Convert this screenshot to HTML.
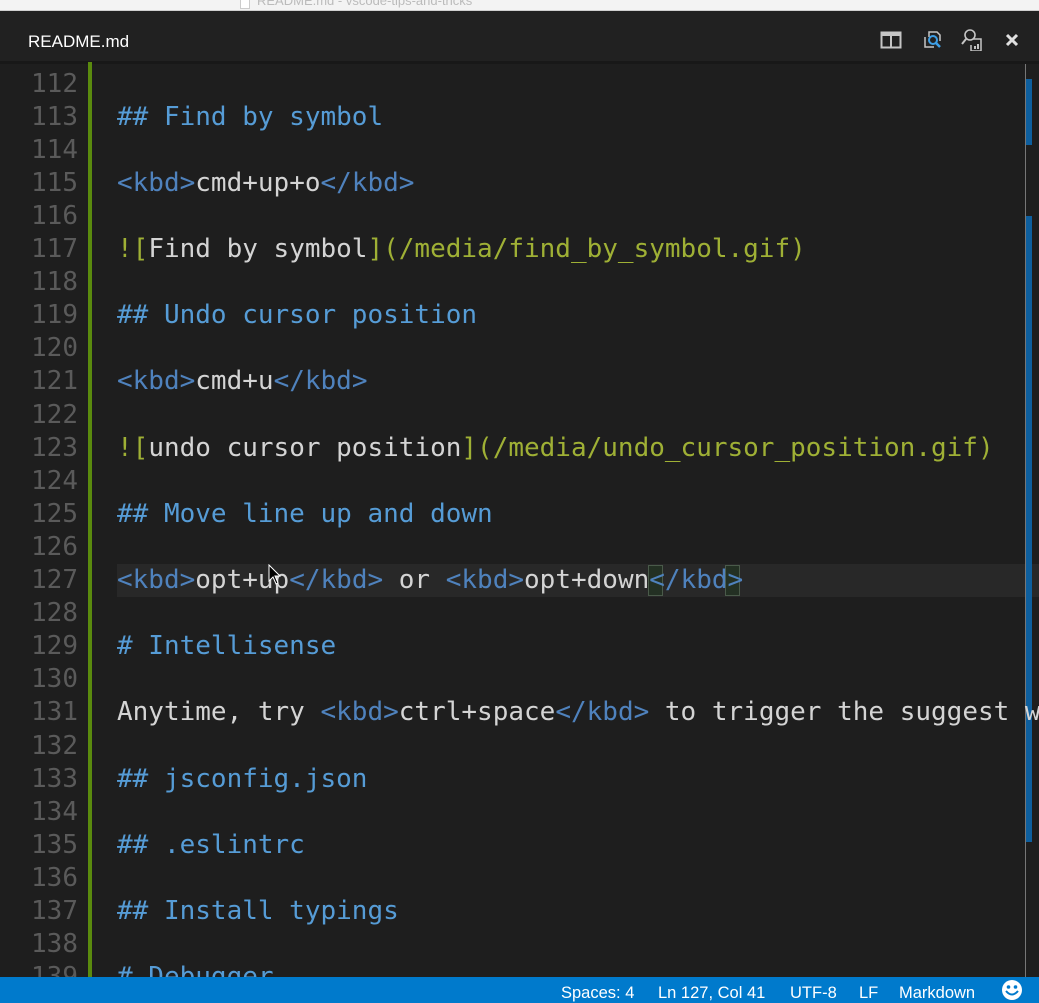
<!DOCTYPE html>
<html><head><meta charset="utf-8"><style>
*{margin:0;padding:0;box-sizing:border-box}
body{width:1039px;height:1003px;background:#1e1e1e;overflow:hidden;position:relative;font-family:"DejaVu Sans Mono","Liberation Mono",monospace}
#title{position:absolute;left:0;top:0;width:1039px;height:11px;background:#f3f3f3;border-bottom:1px solid #cfcfcf;overflow:hidden}
#title span{position:absolute;left:257px;top:-7px;font:13px "Liberation Sans",sans-serif;color:#bbb}
#title i{position:absolute;left:240px;top:-3px;width:10px;height:12px;border:1px solid #ccc;background:#fff}
#tabs{position:absolute;left:0;top:11px;width:1039px;height:51px;background:#212121}
#tabs .name{position:absolute;left:28px;top:21px;font:17px "Liberation Sans",sans-serif;color:#fff}
#sep{position:absolute;left:0;top:61px;width:1039px;height:3px;background:#181818}
#code{position:absolute;left:0;top:2px;width:1039px;height:975px;overflow:hidden}
.gut{position:absolute;left:0;width:78px;text-align:right;color:#5a5a5a;font-size:26px;line-height:33.1px;height:33.1px}
.ln{position:absolute;left:117px;width:922px;overflow:hidden;white-space:pre;font-size:26px;line-height:33.1px;height:33.1px;color:#d4d4d4}
.h{color:#569cd6}.t{color:#4f82bd}.l{color:#9fb035}
#bar{position:absolute;left:88px;top:62px;width:4px;height:915px;background:#5a8a0e}
#hl{position:absolute;left:117px;top:564px;width:922px;height:33px;background:#282828}
#status{position:absolute;left:0;top:977px;width:1039px;height:26px;background:#007acc;color:#fff;font:16.5px "Liberation Sans",sans-serif}
#status span{position:absolute;top:7px;white-space:nowrap}
</style></head><body>
<div id="title"><i></i><span>README.md - vscode-tips-and-tricks</span></div>
<div id="tabs"><div class="name">README.md</div>
<svg style="position:absolute;left:880px;top:20px" width="22" height="18"><rect x="1.5" y="1.5" width="19" height="15" fill="none" stroke="#c5c5c5" stroke-width="2"/><rect x="1" y="1" width="20" height="4" fill="#c5c5c5"/><line x1="11" y1="2" x2="11" y2="17" stroke="#c5c5c5" stroke-width="2"/></svg>
<svg style="position:absolute;left:921px;top:17px" width="24" height="24"><path d="M4 9v10h9M8 9V4h8l3 3v6" fill="none" stroke="#c5c5c5" stroke-width="1.5"/><circle cx="12" cy="12" r="4" fill="none" stroke="#3e9fe6" stroke-width="2"/><line x1="15" y1="15" x2="19" y2="19" stroke="#3e9fe6" stroke-width="2.5"/></svg>
<svg style="position:absolute;left:961px;top:16px" width="24" height="24"><circle cx="9" cy="8" r="5" fill="none" stroke="#c5c5c5" stroke-width="1.6"/><line x1="5" y1="12" x2="1" y2="17" stroke="#c5c5c5" stroke-width="2"/><path d="M12 12h8v12h-10v-6" fill="none" stroke="#c5c5c5" stroke-width="1.5"/><rect x="13" y="19" width="2" height="3" fill="#c5c5c5"/><rect x="16" y="17" width="2" height="5" fill="#c5c5c5"/></svg>
<svg style="position:absolute;left:1005px;top:22px" width="14" height="14"><path d="M2 2L12 12M12 2L2 12" stroke="#e0e0e0" stroke-width="3"/></svg>
</div>
<div id="sep"></div>
<div id="hl"></div>
<div id="bar"></div>
<div style="position:absolute;left:1025px;top:64px;width:1px;height:913px;background:#777"></div>
<div style="position:absolute;left:1026px;top:79px;width:6px;height:66px;background:#0e5f9e"></div>
<div style="position:absolute;left:1026px;top:216px;width:6px;height:626px;background:#0e5f9e"></div>
<div style="position:absolute;left:648px;top:565px;width:15px;height:31px;border:1px solid #4a5a4a;background:#233023"></div>
<div style="position:absolute;left:725px;top:565px;width:15px;height:31px;border:1px solid #4a5a4a;background:#233023"></div>
<div id="code">
<div class="gut" style="top:65.5px">112</div>
<div class="gut" style="top:98.6px">113</div><div class="ln h" style="top:98.6px">## Find by symbol</div>
<div class="gut" style="top:131.7px">114</div>
<div class="gut" style="top:164.8px">115</div><div class="ln" style="top:164.8px"><span class="t">&lt;kbd&gt;</span>cmd+up+o<span class="t">&lt;/kbd&gt;</span></div>
<div class="gut" style="top:197.9px">116</div>
<div class="gut" style="top:231px">117</div><div class="ln" style="top:231px"><span class="l">![</span>Find by symbol<span class="l">](/media/find_by_symbol.gif)</span></div>
<div class="gut" style="top:264.1px">118</div>
<div class="gut" style="top:297.2px">119</div><div class="ln h" style="top:297.2px">## Undo cursor position</div>
<div class="gut" style="top:330.3px">120</div>
<div class="gut" style="top:363.4px">121</div><div class="ln" style="top:363.4px"><span class="t">&lt;kbd&gt;</span>cmd+u<span class="t">&lt;/kbd&gt;</span></div>
<div class="gut" style="top:396.5px">122</div>
<div class="gut" style="top:429.6px">123</div><div class="ln" style="top:429.6px"><span class="l">![</span>undo cursor position<span class="l">](/media/undo_cursor_position.gif)</span></div>
<div class="gut" style="top:462.7px">124</div>
<div class="gut" style="top:495.8px">125</div><div class="ln h" style="top:495.8px">## Move line up and down</div>
<div class="gut" style="top:528.9px">126</div>
<div class="gut" style="top:562px">127</div><div class="ln" style="top:562px"><span class="t">&lt;kbd&gt;</span>opt+up<span class="t">&lt;/kbd&gt;</span> or <span class="t">&lt;kbd&gt;</span>opt+down<span class="t">&lt;/kbd&gt;</span></div>
<div class="gut" style="top:595.1px">128</div>
<div class="gut" style="top:628.2px">129</div><div class="ln h" style="top:628.2px"># Intellisense</div>
<div class="gut" style="top:661.3px">130</div>
<div class="gut" style="top:694.4px">131</div><div class="ln" style="top:694.4px">Anytime, try <span class="t">&lt;kbd&gt;</span>ctrl+space<span class="t">&lt;/kbd&gt;</span> to trigger the suggest w</div>
<div class="gut" style="top:727.5px">132</div>
<div class="gut" style="top:760.6px">133</div><div class="ln h" style="top:760.6px">## jsconfig.json</div>
<div class="gut" style="top:793.7px">134</div>
<div class="gut" style="top:826.8px">135</div><div class="ln h" style="top:826.8px">## .eslintrc</div>
<div class="gut" style="top:859.9px">136</div>
<div class="gut" style="top:893px">137</div><div class="ln h" style="top:893px">## Install typings</div>
<div class="gut" style="top:926.1px">138</div>
<div class="gut" style="top:959.2px">139</div><div class="ln h" style="top:959.2px"># Debugger</div>
</div>
<svg style="position:absolute;left:268px;top:564px" width="14" height="22"><path d="M1 1v16l4-4 3 7 2-1-3-7h5z" fill="#000" stroke="#fff" stroke-width="1"/></svg>
<div id="status">
<span style="left:561px">Spaces: 4</span>
<span style="left:658px">Ln 127, Col 41</span>
<span style="left:790px">UTF-8</span>
<span style="left:859px">LF</span>
<span style="left:899px">Markdown</span>
<svg style="position:absolute;left:1001px;top:2px" width="22" height="22"><circle cx="11" cy="11" r="10" fill="#fff"/><circle cx="7.5" cy="8" r="1.8" fill="#007acc"/><circle cx="14.5" cy="8" r="1.8" fill="#007acc"/><path d="M5 12q6 7 12 0" fill="none" stroke="#007acc" stroke-width="2"/></svg>
</div>
</body></html>
